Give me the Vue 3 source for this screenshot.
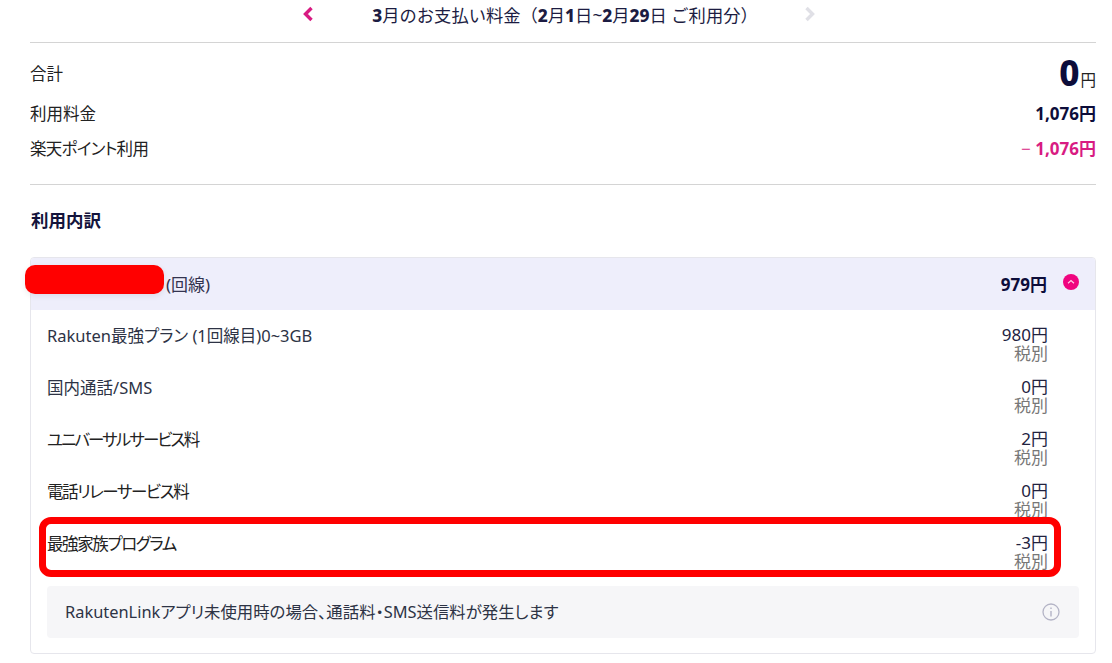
<template>
  <div class="page">
    <!-- Month switcher -->
    <div class="month-nav">
      <svg class="month-nav__arrow" width="12" height="16" viewBox="0 0 12 16">
        <path d="M9.500 2 3.500 8l6 6" fill="none" stroke="#d81b82" stroke-width="3.400" />
      </svg>
      <h1 class="month-nav__title">
        <b>3</b>月のお支払い料金（<b>2</b>月<b>1</b>日~<b>2</b>月<b>29</b>日 ご利用分）
      </h1>
      <svg class="month-nav__arrow" width="12" height="16" viewBox="0 0 12 16">
        <path d="M2.500 2 8.500 8l-6 6" fill="none" stroke="#e0e0e6" stroke-width="3.400" />
      </svg>
    </div>

    <!-- Summary -->
    <section class="summary">
      <div class="summary__row summary__row--total">
        <span class="summary__label">合計</span>
        <span class="summary__total"><b>0</b><span>円</span></span>
      </div>
      <div class="summary__row">
        <span class="summary__label">利用料金</span>
        <b class="summary__amount">1,076円</b>
      </div>
      <div class="summary__row">
        <span class="summary__label summary__label--tight">楽天ポイント利用</span>
        <b class="summary__amount summary__amount--minus"><span class="summary__minus">−</span> 1,076円</b>
      </div>
    </section>

    <h2 class="heading">利用内訳</h2>

    <!-- Breakdown card -->
    <section class="card">
      <header class="card__head">
        <span class="card__line">(回線)</span>
        <b class="card__sum">979円</b>
        <svg class="card__toggle" width="16" height="16" viewBox="0 0 16 16">
          <circle cx="8" cy="8" r="8" fill="#f0047f" />
          <path d="M5 9.200 8 6.500l3 2.700" fill="none" stroke="#ffd0e6" stroke-width="1.200" />
        </svg>
      </header>
      <div v-for="item in items" :key="item.name" class="item">
        <span class="item__name" :class="item.nameClass">{{ item.name }}</span>
        <div class="item__price">
          <div class="item__yen">{{ item.price }}円</div>
          <div class="item__tax">税別</div>
        </div>
      </div>
      <div class="notice">
        <span class="notice__text">RakutenLinkアプリ未使用時の場合、通話料・SMS送信料が発生します</span>
        <svg width="18" height="18" viewBox="0 0 18 18">
          <circle cx="9" cy="9" r="8" fill="none" stroke="#b4b4c6" stroke-width="1.300" />
          <path d="M9 8v5.500M9 4.500v1.600" fill="none" stroke="#b4b4c6" stroke-width="1.400" />
        </svg>
      </div>
    </section>

    <!-- Marks drawn over the screenshot -->
    <div class="redact"></div>
    <div class="highlight"></div>
  </div>
</template>

<script setup>
const items = [
  { name: 'Rakuten最強プラン (1回線目)0~3GB', price: '980' },
  { name: '国内通話/SMS', price: '0' },
  { name: 'ユニバーサルサービス料', price: '2', nameClass: 'item__name--tighter' },
  { name: '電話リレーサービス料', price: '0', nameClass: 'item__name--tight' },
  { name: '最強家族プログラム', price: '-3', nameClass: 'item__name--tight' },
]
</script>

<style>
html,
body {
  margin: 0;
  background: #fff;
  overflow: hidden;
}
</style>

<style scoped>
.page {
  position: relative;
  box-sizing: border-box;
  width: 1112px;
  height: 663px;
  padding: 0 16px 0 30px;
  color: #0d0d3a;
  font-family: "Noto Sans", "Noto Sans CJK JP", sans-serif;
  font-feature-settings: "palt";
  overflow: hidden;
}

.month-nav {
  display: flex;
  align-items: center;
  justify-content: center;
  height: 28px;
  padding: 0 8px 14px 0;
  border-bottom: 1px solid #d4d4d4;
}

.month-nav__arrow {
  flex: none;
}

.month-nav__title {
  margin: 0 46px 0 58px;
  font-size: 17.300px;
  font-weight: 400;
  font-feature-settings: normal;
  color: #1c1c42;
}

.month-nav__title b {
  font-weight: 800;
}

.summary {
  padding-top: 9px;
  height: 132px;
  border-bottom: 1px solid #d4d4d4;
}

.summary__row {
  display: flex;
  align-items: center;
  justify-content: space-between;
  height: 35px;
  font-size: 16.500px;
}

.summary__row--total {
  height: 42px;
  margin-bottom: 1px;
}

.summary__label {
  color: #222;
}

.summary__label--tight {
  letter-spacing: -0.700px;
}

.summary__total {
  display: flex;
  align-items: baseline;
}

.summary__total b {
  font-size: 35px;
  font-weight: 800;
  line-height: 42px;
}

.summary__total span {
  font-size: 15.500px;
  margin-left: 1px;
  color: #222;
}

.summary__amount {
  font-weight: 700;
  font-size: 17px;
}

.summary__amount--minus {
  color: #d81b82;
}

.summary__minus {
  font-weight: 400;
}

.heading {
  margin: 0;
  padding-left: 1px;
  height: 72px;
  line-height: 70px;
  font-size: 17.500px;
  font-weight: 700;
  color: #14143c;
}

.card {
  height: 397px;
  box-sizing: border-box;
  border: 1px solid #e6e6ec;
  border-radius: 4px;
  overflow: hidden;
}

.card__head {
  display: flex;
  align-items: center;
  height: 52px;
  padding: 0 16px 0 135px;
  background: #eeeefb;
  font-size: 17px;
}

.card__line {
  flex: 1;
  color: #33334f;
  padding-bottom: 2px;
}

.card__sum {
  margin-right: 16px;
  font-size: 17px;
  font-weight: 700;
  padding-bottom: 2px;
}

.card__toggle {
  margin-bottom: 4px;
}

.item {
  display: flex;
  justify-content: space-between;
  height: 52px;
  padding: 16px 47px 0 16px;
  box-sizing: border-box;
}

.item__name {
  font-size: 16.500px;
  line-height: 20px;
  color: #2d3345;
}

.item__name--tight {
  letter-spacing: -1.400px;
  color: #222;
}

.item__name--tighter {
  letter-spacing: -1.900px;
  color: #222;
}

.item__price {
  text-align: right;
  font-size: 17px;
  line-height: 18px;
}

.item__yen {
  color: #22223f;
}

.item__tax {
  margin-top: 1px;
  color: #777;
}

.notice {
  display: flex;
  align-items: center;
  justify-content: space-between;
  height: 52px;
  margin: 16px 16px 0;
  padding: 0 19px 0 18px;
  box-sizing: border-box;
  background: #f6f6f8;
  border-radius: 4px;
  font-size: 16.400px;
  color: #2d3345;
}

.notice__text {
  margin-bottom: 2px;
}

.redact {
  position: absolute;
  left: 25px;
  top: 265px;
  width: 139px;
  height: 29px;
  border-radius: 10px;
  background: #ff0000;
  box-shadow: 0 2px 6px rgba(0, 0, 0, 0.08);
}

.highlight {
  position: absolute;
  left: 39px;
  top: 517px;
  width: 1022px;
  height: 60px;
  box-sizing: border-box;
  border: 7px solid #ff0000;
  border-radius: 12px;
}
</style>
